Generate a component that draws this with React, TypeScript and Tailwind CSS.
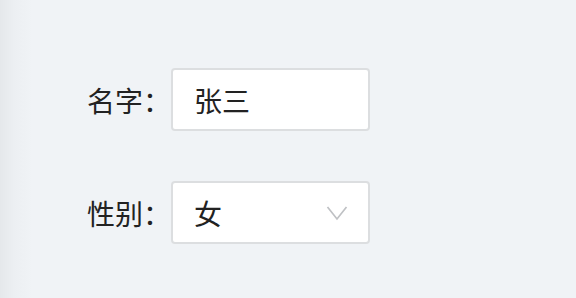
import React, { useState } from 'react';

const font = { fontFamily: '"Noto Sans CJK SC", "Noto Sans", sans-serif' };

function Chevron() {
  return (
    <svg width="22" height="16" viewBox="0 0 22 16" fill="none" className="shrink-0">
      <path d="M1.5 2 L11 14 L20.5 2" stroke="#bfc1c4" strokeWidth="1.7" />
    </svg>
  );
}

export default function App() {
  const [nome, setNome] = useState('张三');
  const [sexo] = useState('女');

  return (
    <div className="w-[576px] h-[298px] bg-[linear-gradient(to_right,#e5e8eb_0px,#eceff2_14px,#f0f3f6_32px)] overflow-hidden" style={font}>
      <div className="pt-[68px] pl-[87px] flex flex-col gap-[50px] text-[28px] text-[#222]">
        <div className="flex items-center h-[63px]">
          <label className="w-[84px] leading-none">名字：</label>
          <div className="w-[199px] h-[63px] bg-white border-2 border-[#dcdee0] rounded-[4px] flex items-center px-[21px]">
            <input value={nome} onChange={e => setNome(e.target.value)} className="w-full bg-transparent outline-none leading-none" style={font} />
          </div>
        </div>
        <div className="flex items-center h-[63px]">
          <label className="w-[84px] leading-none">性别：</label>
          <div className="w-[199px] h-[63px] bg-white border-2 border-[#dcdee0] rounded-[4px] flex items-center justify-between pl-[21px] pr-[20px]">
            <span className="leading-none">{sexo}</span>
            <Chevron />
          </div>
        </div>
      </div>
    </div>
  );
}
